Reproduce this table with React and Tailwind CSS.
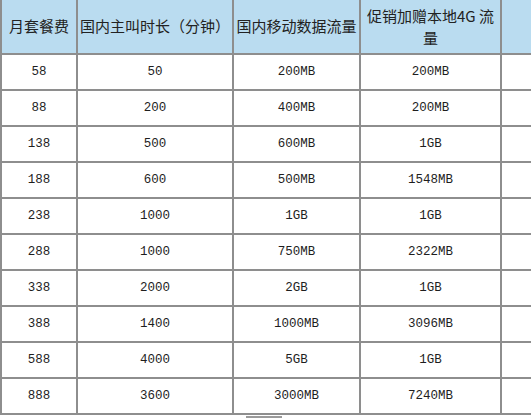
import React from "react";

const rows = [
    ["58", "50", "200MB", "200MB"],
    ["88", "200", "400MB", "200MB"],
    ["138", "500", "600MB", "1GB"],
    ["188", "600", "500MB", "1548MB"],
    ["238", "1000", "1GB", "1GB"],
    ["288", "1000", "750MB", "2322MB"],
    ["338", "2000", "2GB", "1GB"],
    ["388", "1400", "1000MB", "3096MB"],
    ["588", "4000", "5GB", "1GB"],
    ["888", "3600", "3000MB", "7240MB"],
];

const cjk = { fontFamily: '"Noto Sans CJK SC", "Noto Sans", sans-serif' };
const num = { fontFamily: '"Liberation Mono", "DejaVu Sans Mono", monospace' };

const App = () => {
    return (
        <div className="w-[531px] h-[418px] overflow-hidden bg-white">
            <div className="grid grid-cols-[76px_156px_127px_141px_29px] border-l-2 border-[#8e8e8e]">
                {/* header */}
                <div style={cjk} className="h-[55px] bg-[#badcf0] border-r-2 border-b-2 border-[#8e8e8e] flex items-center justify-center text-[15px] text-[#222]">月套餐费</div>
                <div style={cjk} className="h-[55px] bg-[#badcf0] border-r-2 border-b-2 border-[#8e8e8e] flex items-center justify-center text-[15px] text-[#222] whitespace-nowrap">国内主叫时长（分钟）</div>
                <div style={cjk} className="h-[55px] bg-[#badcf0] border-r-2 border-b-2 border-[#8e8e8e] flex items-center justify-center text-[15px] text-[#222] whitespace-nowrap">国内移动数据流量</div>
                <div style={cjk} className="h-[55px] bg-[#badcf0] border-r-2 border-b-2 border-[#8e8e8e] flex items-center justify-center text-center text-[15px] leading-[22px] text-[#222]">
                    <span>促销加赠本地4G 流<br />量</span>
                </div>
                <div className="h-[55px] bg-[#badcf0] border-b-2 border-[#8e8e8e]"></div>

                {rows.map((r, i) => (
                    <React.Fragment key={i}>
                        {r.map((c, j) => (
                            <div key={j} style={num} className="h-[36px] border-r-2 border-b-2 border-[#8e8e8e] flex items-center justify-center text-[12.5px] text-[#1e1e1e]">
                                {c}
                            </div>
                        ))}
                        <div className="h-[36px] border-b-2 border-[#8e8e8e]"></div>
                    </React.Fragment>
                ))}
            </div>
            <div className="ml-[246px] mt-[1px] w-[36px] h-[2px] bg-[#9a9a9a]"></div>
        </div>
    );
};

export default App;
